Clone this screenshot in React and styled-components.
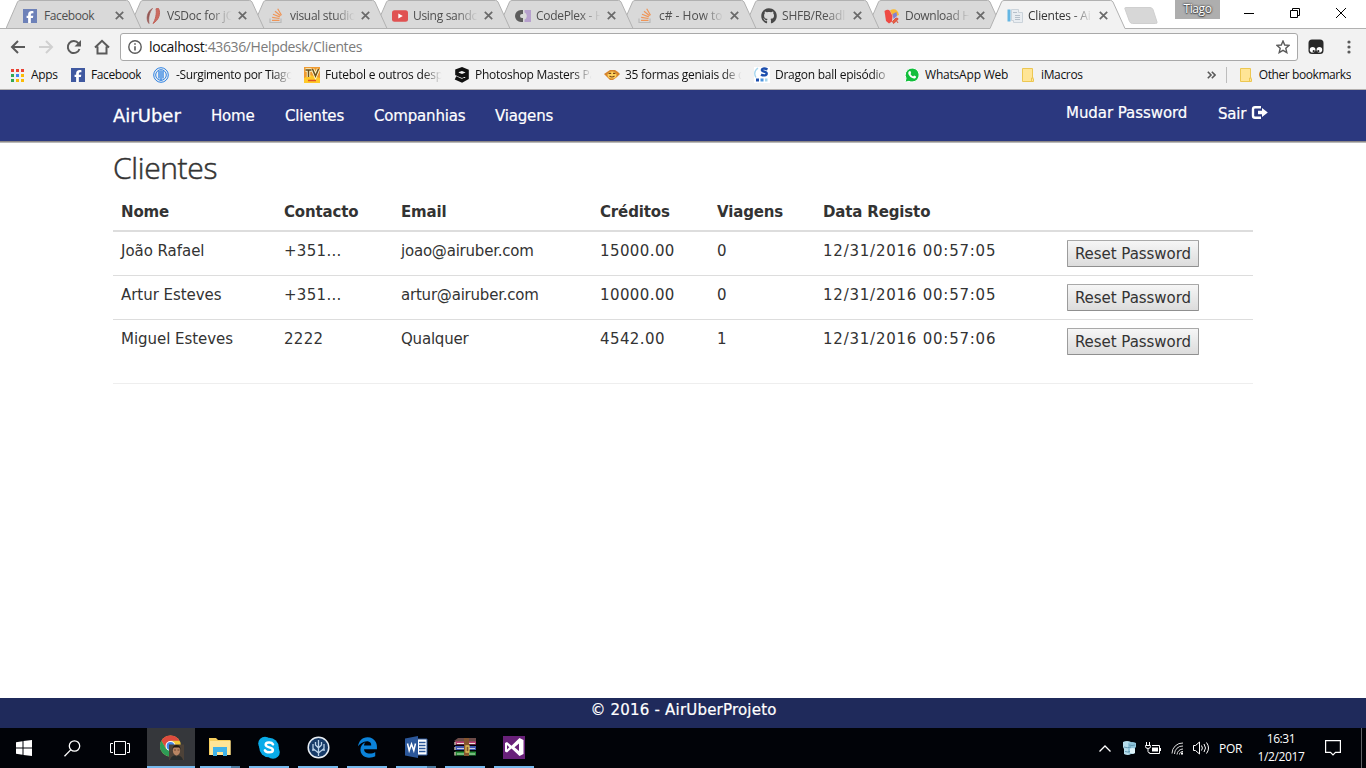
import React from "react";
import styled, { createGlobalStyle } from "styled-components";
import { FaGithub, FaFacebookF, FaEdgeLegacy } from "react-icons/fa6";

const GlobalStyle = createGlobalStyle`
  * { box-sizing: border-box; }
  body { margin: 0; background: #fff; overflow: hidden; }
  svg { display: block; flex: none; }
`;

const ui = `"Open Sans", "Noto Sans", sans-serif`;
const verdana = `"DejaVu Sans", Verdana, sans-serif`;

const Screen = styled.div`
  width: 1366px;
  height: 768px;
  display: flex;
  flex-direction: column;
  background: #fff;
`;

/* ---------- browser ---------- */
const TabStrip = styled.div`
  height: 29px;
  display: flex;
  padding-left: 6px;
  position: relative;
  isolation: isolate;
  flex: none;
  background: linear-gradient(#fff 28px, #b1b1b1 28px);
  font-family: ${ui};
  font-size: 12px;
`;
const Tab = styled.div`
  position: relative;
  z-index: ${p => p.$z};
  width: 136px;
  height: 29px;
  margin-right: -13px;
  flex: none;
  display: flex;
  align-items: center;
  padding: 2px 0 0 17px;
  color: ${p => (p.$active ? "#333" : "#4f4f4f")};
`;
const TabShape = styled.svg`
  position: absolute;
  left: 0;
  top: 0;
  z-index: -1;
`;
const TabIcon = styled.span`
  width: 16px;
  flex: none;
`;
const TabTitle = styled.span`
  width: 66px;
  margin: 0 5px;
  overflow: hidden;
  white-space: nowrap;
  line-height: 18px;
  letter-spacing: ${p => p.$ls ?? -0.2}px;
  ${p => p.$fade && "mask-image: linear-gradient(90deg, #000 66%, transparent 98%);"}
`;
const NewTab = styled.svg`
  margin-left: 10px;
`;
const WindowControls = styled.div`
  margin-left: auto;
  margin-right: 2px;
  display: flex;
  height: 28px;
  align-items: flex-start;
`;
const UserBadge = styled.div`
  width: 45px;
  height: 19px;
  margin-right: 6px;
  background: #aeaeae;
  color: #fff;
  text-align: center;
  line-height: 18px;
  letter-spacing: -0.4px;
  text-shadow: 0 0 2px #444, 0 0 2px #444, 0 1px 1px #555;
`;
const ControlButton = styled.div`
  width: 46px;
  height: 26px;
  display: flex;
  align-items: center;
  justify-content: center;
`;

const Toolbar = styled.div`
  height: 33px;
  flex: none;
  background: #f2f2f2;
  display: flex;
  align-items: center;
  padding: 3px 0 0 10px;
`;
const NavButton = styled.div`
  width: 28px;
  display: flex;
  svg { width: 16px; height: 16px; }
`;
const AddressBar = styled.div`
  width: 1178px;
  height: 28px;
  margin-left: -2px;
  border: 1px solid #a9a9a9;
  border-radius: 3px;
  background: #fff;
  display: flex;
  align-items: center;
  padding: 0 7px;
  color: #7b7b7b;
  font: 14px ${ui};
  letter-spacing: -0.37px;
  span { margin: 0 auto 0 7px; line-height: 20px; }
  b { font-weight: 400; color: #111; }
`;
const ToolbarEnd = styled.div`
  display: flex;
  align-items: center;
  gap: 23px;
  margin-left: 10px;
`;

const Bookmarks = styled.div`
  height: 28px;
  flex: none;
  background: #f2f2f2;
  border-bottom: 1px solid #b4b1b0;
  display: flex;
  align-items: center;
  padding: 0 15px 2px 9px;
  font: 12px ${ui};
  color: #111;
`;
const Bookmark = styled.div`
  width: ${p => p.$w}px;
  display: flex;
  align-items: center;
  gap: ${p => p.$gap ?? 5}px;
  white-space: nowrap;
  letter-spacing: ${p => p.$ls ?? -0.2}px;
  span {
    overflow: hidden;
    width: ${p => (p.$fade ? p.$fade + "px" : "auto")};
    ${p => p.$fade && "mask-image: linear-gradient(90deg, #000 82%, transparent 98%);"}
  }
`;
const Overflow = styled.div`
  margin-left: auto;
  display: flex;
  align-items: center;
`;
const Divider = styled.i`
  width: 1px;
  height: 16px;
  margin: 0 12px 0 10px;
  background: #bdbdbd;
`;
const FacebookTile = styled.div`
  width: 14px;
  height: 14px;
  flex: none;
  background: ${p => (p.$faded ? "#6d81b8" : "#4059a0")};
  color: #fff;
  display: flex;
  align-items: flex-end;
  justify-content: flex-end;
  padding-right: 1px;
`;

/* ---------- page ---------- */
const NavBar = styled.nav`
  height: 53px;
  flex: none;
  background: #2b387f;
  border-bottom: 1px solid #b9b9b9;
  box-shadow: inset 0 -1px #8d8888;
  display: flex;
  padding: 0 97px 0 113px;
  color: #fff;
  font: 15px ${verdana};
`;
const Brand = styled.div`
  width: 98px;
  font-size: 18px;
  line-height: 51px;
  -webkit-text-stroke: 0.3px #fff;
`;
const NavItem = styled.div`
  margin-right: 30px;
  width: ${p => p.$w}px;
  white-space: nowrap;
  line-height: ${p => p.$lh ?? 53}px;
  letter-spacing: ${p => p.$ls ?? -0.18}px;
  -webkit-text-stroke: 0.2px #fff;
  display: flex;
  gap: 5px;
  svg { margin-top: 15px; }
`;
const NavRight = styled.div`
  display: flex;
  margin-left: auto;
  & > :last-child { margin-right: 0; }
`;

const Page = styled.main`
  flex: 1;
  padding: 0 113px;
  color: #333;
  font: 15px/21px ${verdana};
`;
const Title = styled.h2`
  margin: 8px 0 9px;
  height: 33px;
  font: 300 30px/33px ${ui};
  letter-spacing: -0.35px;
  -webkit-text-stroke: 0.5px #333;
`;
const Table = styled.table`
  width: 1140px;
  table-layout: fixed;
  border-collapse: separate;
  border-spacing: 0;
`;
const HeadCell = styled.th`
  width: ${p => p.$w}px;
  height: 39px;
  padding: 9px 8px 7px;
  text-align: left;
  line-height: 21px;
  border-bottom: 2px solid #ddd;
  letter-spacing: -0.15px;
`;
const Cell = styled.td`
  height: ${p => (p.$first ? 43 : 44)}px;
  padding: ${p => (p.$action ? "8px" : "9px 8px 7px")};
  vertical-align: top;
  line-height: 21px;
  white-space: nowrap;
  border-top: ${p => (p.$first ? "0" : "1px solid #ddd")};
  letter-spacing: ${p => p.$ls ?? 0}px;
`;
const ResetButton = styled.button`
  display: block;
  width: 132px;
  height: 27px;
  padding: 1px 0 0;
  border: 1px solid #a2a2a2;
  border-color: #a9a9a9 #9c9c9c #8f8f8f #9c9c9c;
  border-radius: 1px;
  background: linear-gradient(#f6f6f6, #dcdcdc);
  color: #333;
  font: 15px/24px ${verdana};
  letter-spacing: -0.04px;
  white-space: nowrap;
`;
const Rule = styled.hr`
  margin: 20px 0 0;
  border: 0;
  border-top: 1px solid #eee;
`;
const Footer = styled.footer`
  height: 30px;
  flex: none;
  background: #1f2a5b;
  color: #fff;
  text-align: center;
  font: 15px/24px ${verdana};
  letter-spacing: 0.2px;
  -webkit-text-stroke: 0.2px #fff;
  padding-left: 1px;
`;

/* ---------- taskbar ---------- */
const Taskbar = styled.div`
  height: 40px;
  flex: none;
  background: #010308;
  display: flex;
  color: #fff;
  font: 12px ${ui};
`;
const SystemButton = styled.div`
  width: ${p => p.$w ?? 48}px;
  height: 40px;
  display: flex;
  align-items: center;
  justify-content: center;
`;
const Apps = styled.div`
  display: flex;
  gap: 1px;
  margin-left: 3px;
`;
const AppButton = styled.div`
  width: 48px;
  height: 40px;
  padding: 0 ${p => (p.$active ? 0 : 4)}px;
  background: ${p => (p.$active ? "#35373b" : "transparent")};
  display: flex;
  flex-direction: column;
  align-items: center;
  & > :first-child { margin: auto; }
`;
const Underline = styled.i`
  width: 100%;
  height: 2px;
  flex: none;
  background: ${p => (p.$stack ? "linear-gradient(90deg,#76b9ed 31px,#4d7ba0 31px)" : "#76b9ed")};
`;
const Tray = styled.div`
  margin-left: auto;
  display: flex;
  align-items: center;
`;
const Language = styled.span`
  width: 24px;
  margin-left: 6px;
  letter-spacing: -0.3px;
`;
const Clock = styled.div`
  width: 70px;
  margin-left: 3px;
  text-align: center;
  line-height: 18px;
  padding-bottom: 1px;
  letter-spacing: -0.4px;
`;
const NoticeButton = styled(SystemButton)`
  width: 32px;
  margin-left: 1px;
`;
const DesktopEdge = styled.i`
  width: 1px;
  height: 40px;
  margin: 0 4px 0 12px;
  background: #606266;
`;

/* ---------- drawings ---------- */
const Close = ({ c = "#6a6a6a" }) => (
  <svg width="9" height="9" viewBox="0 0 9 9"><path d="M.8.8l7.4 7.4M8.2.8L.8 8.2" stroke={c} strokeWidth="1.7" /></svg>
);
const Facebook = ({ faded }) => <FacebookTile $faded={faded}><FaFacebookF size={12} /></FacebookTile>;
const JQueryDoc = () => (
  <svg width="16" height="16" viewBox="0 0 16 16">
    <path d="M6.500.5C1 3-.5 12 3 15.500 2 10 3.500 4 6.500.5z" fill="#8d5451" stroke="#9d5c58" strokeWidth=".7" />
    <path d="M7 15.500C9.500 12 11 5 10 .8L12.500.5C15 5 13 12 7 15.500z" fill="#cc6c60" stroke="#c2635a" />
  </svg>
);
const StackOverflow = () => (
  <svg width="16" height="16" viewBox="0 0 16 16" fill="none">
    <path d="M1 10.500V14.500H12V10.500" stroke="#b9b9b9" strokeWidth="1.200" />
    <path d="M3 12.300H10.500M3.200 9.400l7.300 1.100M4 6.200l6.800 2.700M6 3.200l5.600 4.600M8.700.8l3.800 6.400" stroke="#ef9558" strokeWidth="1.200" />
  </svg>
);
const YouTube = () => (
  <svg width="16" height="16" viewBox="0 0 16 16"><rect y="2.300" width="16" height="11.500" rx="2.500" fill="#e05252" /><path d="M6.300 5.500v5l4.500-2.500z" fill="#fff" /></svg>
);
const CodePlex = () => (
  <svg width="16" height="16" viewBox="0 0 16 16"><path d="M8 2H6a6 6 0 000 12h2v-4H7a2 2 0 010-4h1z" fill="#5c5c5c" /><path d="M9.500 2h6.500v12H9.500v-2.500c3-1 3-6 0-7z" fill="#b7a1cd" /></svg>
);
const Download = () => (
  <svg width="16" height="16" viewBox="0 0 16 16"><path d="M6 2.500C10 0 14 1.500 15 7L9.500 9z" fill="#f9b936" /><path d="M8.500 6l4-2 .5 4-3.500 3z" fill="#8181d2" /><path d="M.5 3Q4 .5 6 3l2.500 5L8 13.500 5 15.500 2 13z" fill="#ee4a44" /><path d="M8.500 13.500L12 10l2 .5-.5 1.500-4 3.500zM12.500 12.500l1.500 2.500" fill="#e8613e" stroke="#d85245" /></svg>
);
const PageIcon = () => (
  <svg width="16" height="16" viewBox="0 0 16 16"><path d="M.5 1.500h3v12h-3z" fill="#64b6e3" /><path d="M4.500 1.500h7v3h4v10h-9v-2h-2z" fill="#e9edf1" stroke="#cbd3da" /><path d="M6 4.500h4M8 7.500h5M8 9.500h5M8 11.500h5" stroke="#b6c0ca" /></svg>
);
const AppsIcon = () => {
  const colors = ["#ea4335", "#ea4335", "#ea4335", "#34a853", "#4285f4", "#fbbc05", "#34a853", "#fbbc05", "#fbbc05"];
  return <svg width="16" height="16" viewBox="0 0 16 16">{colors.map((c, i) => <rect key={i} x={2 + (i % 3) * 5} y={2 + Math.floor(i / 3) * 5} width="3" height="3" fill={c} />)}</svg>;
};
const Rings = () => (
  <svg width="16" height="16" viewBox="0 0 16 16" fill="none" stroke="#2b80e2"><circle cx="8" cy="8" r="7.300" /><circle cx="8" cy="8" r="5.300" /><path d="M6 4v7.500M8 3.500v10M10 4v7.500" strokeWidth="1.300" /></svg>
);
const TvIcon = () => (
  <svg width="16" height="16" viewBox="0 0 16 16"><rect width="16" height="16" fill="#ef9a31" /><path d="M0 11l6-3 10 3v5H0z" fill="#ffc928" /><path d="M1.500 3h6M4.500 3v7M8.500 2l3 7L14.500 2" stroke="#fff7c8" strokeWidth="3.400" fill="none" /><path d="M1.500 3h6M4.500 3v7M8.500 2l3 7L14.500 2" stroke="#6b501c" strokeWidth="1.500" fill="none" /><path d="M4 13.500h8" stroke="#df5127" strokeWidth="1.500" /></svg>
);
const NineGag = () => (
  <svg width="16" height="16" viewBox="0 0 16 16"><path d="M3 8.200V3.800L8 2l5 2v7L8 13.800 1.500 10.800M3 7l5 2 5-2" fill="none" stroke="#111" strokeWidth="3.600" /></svg>
);
const Face = () => (
  <svg width="16" height="16" viewBox="0 0 16 16"><path d="M0 7l3-2 3-2h5l3 2 2 2-3 3-4 3H6L3 10z" fill="#d7842c" /><ellipse cx="8" cy="8" rx="4.500" ry="3.600" fill="#ffd15c" /><path d="M4.500 6.300h2.700M9 6.300h2.500M5.500 9q2.500 2 5 0" stroke="#774018" strokeWidth="1.200" fill="none" /></svg>
);
const DragonBall = () => (
  <svg width="16" height="16" viewBox="0 0 16 16"><rect width="16" height="16" fill="#fff" /><path d="M4 1C0 4 .5 8 2 10.500" stroke="#a4d5ee" strokeWidth="1.300" fill="none" /><path d="M13.500 2.300C10 .8 7.500 1.500 8 3.400c.4 1.600 4.800 1.100 4.700 3.200 0 2.200-3.400 2.200-5.700 1" fill="none" stroke="#1d4fae" strokeWidth="2.400" /><path d="M2 11.500h3v3H2z" fill="#1d4fae" /><path d="M6.500 11.500h3v3h-3z" fill="#4b94de" /><path d="M11 11.500h2.500v3H11z" fill="#a4d5ee" /></svg>
);
const WhatsApp = () => (
  <svg width="16" height="16" viewBox="0 0 16 16"><path d="M1 15.300l1-4A7 7 0 118 15a7 7 0 01-3-.7z" fill="#12bf3c" stroke="#fff" /><path d="M5 4.300l1.400-.2.800 2-.7 1c.6 1.200 1.400 1.800 2.600 2.400l1-1 2 .9c0 3-4 2.400-6.300-.1C4 7.500 3.800 5.300 5 4.300z" fill="#fff" /></svg>
);
const Folder = () => (
  <svg width="14" height="16" viewBox="0 0 14 16"><path d="M1.500 1.500h10v9.500l1 1v2.500h-11z" fill="#ffe596" stroke="#ecc752" /><path d="M10.500 14.500V11h2" fill="none" stroke="#ecc752" /></svg>
);
const stroke = { fill: "none", stroke: "#5a5a5a", strokeWidth: 2 };
const Back = () => <svg viewBox="0 0 16 16" {...stroke}><path d="M15 8H2.500M8 2L2 8l6 6" /></svg>;
const Forward = () => <svg viewBox="0 0 16 16" {...stroke} stroke="#d0d0d0"><path d="M1 8h12.500M8 2l6 6-6 6" /></svg>;
const Reload = () => <svg viewBox="0 0 16 16" {...stroke}><path d="M13.500 10A6 6 0 1112.500 4.300" /><path d="M15 1v6.500H8.500z" fill="#5a5a5a" stroke="none" /></svg>;
const Home = () => <svg viewBox="0 0 16 16" {...stroke}><path d="M1 8.500L8 1.800l7 6.700M3.500 7.500v7h9v-7" /></svg>;
const Info = () => <svg width="14" height="14" viewBox="0 0 14 14" fill="none" stroke="#5a5a5a" strokeWidth="1.400"><circle cx="7" cy="7" r="6.200" /><path d="M7 6.200v4.300M7 3.300v1.500" strokeWidth="1.600" /></svg>;
const Star = () => <svg width="14" height="14" viewBox="0 0 14 14" fill="none" stroke="#5a5a5a" strokeWidth="1.400"><path d="M7 1l1.700 4 4.400.4-3.300 2.900 1 4.300L7 10.300l-3.800 2.300 1-4.300L.9 5.400 5.300 5z" /></svg>;
const Tamper = () => <svg width="16" height="16" viewBox="0 0 16 16"><rect x=".5" y=".5" width="15" height="14.500" rx="3.500" fill="#292929" /><circle cx="4.600" cy="10.700" r="2.800" fill="#fff" /><circle cx="11.400" cy="10.700" r="2.800" fill="#fff" /><circle cx="5.700" cy="12.200" r="1.100" fill="#292929" /><circle cx="10.300" cy="12.200" r="1.100" fill="#292929" /></svg>;
const Menu = () => <svg width="4" height="14" viewBox="0 0 4 14" fill="#5a5a5a"><circle cx="2" cy="2" r="1.600" /><circle cx="2" cy="7" r="1.600" /><circle cx="2" cy="12" r="1.600" /></svg>;
const Chevrons = () => <svg width="9" height="8" viewBox="0 0 9 8" fill="none" stroke="#5a5a5a" strokeWidth="1.600"><path d="M.8.8L4 4 .8 7.200M4.800.8L8 4 4.800 7.200" /></svg>;
const LogOut = () => <svg width="17" height="16" viewBox="0 0 17 16"><path d="M10 2.200H4Q2 2.200 2 4.200v6.600q0 2 2 2h6" fill="none" stroke="#fff" strokeWidth="2.400" /><path d="M7 5.800h4V3L16.800 7.500 11 12V9.200H7z" fill="#fff" /></svg>;

const WindowsLogo = () => <svg width="16" height="16" viewBox="0 0 16 16" fill="#fff"><path d="M0 2.200L6.500 1.300v6.200H0zM7.500 1.100L16 0v7.500H7.500zM0 8.500h6.500v6.200L0 13.800zM7.500 8.500H16V16l-8.500-1.100z" /></svg>;
const Search = () => <svg width="17" height="17" viewBox="0 0 17 17" fill="none" stroke="#fff" strokeWidth="1.300"><circle cx="10.500" cy="6" r="5.200" /><path d="M6.700 9.900L.5 16.300" /></svg>;
const TaskView = () => <svg width="20" height="14" viewBox="0 0 20 14" fill="none" stroke="#fff"><path d="M4.500.5h11v13h-11zM3 2.500H.5v9H3M17 2.500h2.500v9H17" /></svg>;
const Chrome = () => (
  <svg width="25" height="26" viewBox="-2 -1 25 26">
    <g transform="translate(-1 -1)"><circle cx="10.500" cy="12" r="10.500" fill="#f2c73b" /><path d="M1.400 6.700A10.500 10.500 0 0119.600 6.800H10.500l-4.500 8z" fill="#dd4b3e" /><path d="M1.400 6.700l4.600 8 6 2-3 5.700A10.500 10.500 0 011.400 6.700z" fill="#2d9b56" />
    <circle cx="10.500" cy="12" r="5" fill="#fff" /><circle cx="10.500" cy="12" r="3.900" fill="#4285e8" /></g>
    <path d="M8 9.500h15V25H8z" fill="#4d4238" /><ellipse cx="15.500" cy="15.500" rx="3.600" ry="5" fill="#b98563" /><path d="M11.500 14.500q0-4.500 4-4.500t4 4.500l-1-2h-6z" fill="#211914" /><path d="M9 25q1-4 4.500-4.500l2 1 2-1Q21 21 22 25z" fill="#292c2c" /><path d="M13 15h2M16.500 15h2" stroke="#6c4634" />
  </svg>
);
const Explorer = () => <svg width="22" height="20" viewBox="0 0 22 20"><path d="M0 1h7l2 2h12.500v15H0z" fill="#f6ce5e" /><path d="M1 4h20.500v14H1z" fill="#ffe597" /><path d="M4 10h14v9h-4v-4H8v4H4z" fill="#3fb2e9" /></svg>;
const Skype = () => <svg width="22" height="23" viewBox="0 0 22 23"><circle cx="7" cy="7.500" r="6.800" fill="#09ace9" /><circle cx="15" cy="16" r="6.800" fill="#09ace9" /><circle cx="11" cy="11.500" r="9.800" fill="#09ace9" /><path d="M15 8.300C13.500 5.700 7.500 6 7.700 9c.3 3 7.300 1.700 7.200 5 0 3.200-6.500 3-8 .3" fill="none" stroke="#fff" strokeWidth="2.500" strokeLinecap="round" /></svg>;
const SourceTree = () => <svg width="23" height="23" viewBox="0 0 23 23" fill="none"><circle cx="11.500" cy="11.500" r="10.300" fill="#173b68" stroke="#e7edf3" strokeWidth="1.500" /><path d="M11.500 4v16M11.500 17L6 12.500V8M11.500 17l5.500-4.500V8M11.500 12L8.500 9V6M11.500 12l3-3V6M8 14H5M15 14h3" stroke="#b9d1e7" strokeWidth="1.300" /></svg>;
const Word = () => <svg width="23" height="22" viewBox="0 0 23 22"><path d="M12 3h10v16H12z" fill="#fff" stroke="#2b579a" /><path d="M14 6.500h6.500M14 9.500h6.500M14 12.500h6.500M14 15.500h6.500" stroke="#2b579a" strokeWidth="1.300" /><path d="M0 2.500L13 0v22L0 19.500z" fill="#2b579a" /><path d="M2.500 7.500l1.700 7L6.500 8l2.300 6.500 1.700-7" stroke="#fff" strokeWidth="1.500" fill="none" /></svg>;
const WinRar = () => (
  <svg width="24" height="19" viewBox="0 0 24 19">
    <path d="M1 3l4-3h18v4H3z" fill="#6d4b48" /><path d="M2 3.500h21v3H2z" fill="#bf3e79" /><path d="M4 5.500h18" stroke="#eee5d5" /><path d="M2 8h21v4H2z" fill="#4058b2" /><path d="M4 10.500h18" stroke="#c9cce0" /><path d="M2 13.500h21v4H2z" fill="#278e37" /><path d="M4 16h18" stroke="#c6e0c4" />
    <path d="M2 4v3M2 9v3M2 14v3.500" stroke="#b9ae9e" strokeWidth="1.500" /><path d="M11 0h5v18h-5z" fill="#85552f" /><path d="M13 8h3v6h-3z" fill="none" stroke="#dbbd59" strokeWidth="1.300" />
  </svg>
);
const VisualStudio = () => <svg width="22" height="23" viewBox="0 0 22 23"><path d="M0 0h22v23H0z" fill="#682179" /><path d="M2 7l2-1 4.500 3.700L16.500 2 20.500 4v14l-4 2-8-7.500L4 16.500 2 15.500zM4 9v4.500l2.300-2.200zM16 7.500l-4.500 3.700L16 15z" fill="#fff" fillRule="evenodd" /></svg>;

const UpArrow = () => <svg width="12" height="7" viewBox="0 0 12 7" fill="none" stroke="#fff" strokeWidth="1.300"><path d="M.5 6.500L6 1l5.500 5.500" /></svg>;
const Database = () => <svg width="15" height="16" viewBox="0 0 15 16"><path d="M1 2q4-2 8 0v12q-3 2-7 0V9L1 7z" fill="#b6ddeb" /><path d="M6 3q4-2 8 0v4l-1 1v5q-3 2-7 0z" fill="#8fc4da" /><path d="M8 8.500q3-1 5 0V13q-2 1.500-5 0z" fill="#dff4fa" /><path d="M2 7q3 1.500 7 0M3 11.500q3 1 5 0M7 5q3 1 6 0" stroke="#6198b1" fill="none" /></svg>;
const Battery = () => <svg width="16" height="13" viewBox="0 0 16 13" fill="none" stroke="#fff"><path d="M1.500 0v3M4.500 0v3M.5 3.500h5v1q0 2-2.500 2t-2.500-2zM3 6.500v3q0 1.500 2 1.500M7 3.500h7.500v8h-10M15.500 6v3" /><path d="M7 5.500h6v4H7z" fill="#fff" stroke="none" /></svg>;
const Wifi = () => <svg width="13" height="13" viewBox="0 0 13 13" fill="none" stroke="#ddd"><path d="M1 11.500A10.500 10.500 0 0112 1M3.500 12A8 8 0 0112 4M6 12.500A6 6 0 0112 7M8.500 12.500A3 3 0 0112 9.500" /><path d="M10 10.500h2v2h-2z" fill="#fff" stroke="none" /></svg>;
const Volume = () => <svg width="17" height="14" viewBox="0 0 17 14" fill="none" stroke="#fff"><path d="M.5 4.500h2L6.500 1v12l-4-3.500h-2zM8.500 4.500q1.800 2.500 0 5M11 3q3 4 0 8M13.500 1.500q4 5.500 0 11" /></svg>;
const Notice = () => <svg width="16" height="16" viewBox="0 0 16 16" fill="none" stroke="#fff" strokeWidth="1.200"><path d="M.6.6h14.800v11.800h-4.900L8 15l-2.500-2.600H.6z" /></svg>;

const tabs = [
  { title: "Facebook", icon: <Facebook faded />, ls: -0.4 },
  { title: "VSDoc for jQ", icon: <JQueryDoc />, fade: true, ls: -0.2 },
  { title: "visual studio", icon: <StackOverflow />, fade: true, ls: -0.3 },
  { title: "Using sandc", icon: <YouTube />, fade: true, ls: -0.3 },
  { title: "CodePlex - H", icon: <CodePlex />, fade: true, ls: -0.3 },
  { title: "c# - How to", icon: <StackOverflow />, fade: true, ls: 0 },
  { title: "SHFB/Readl", icon: <FaGithub size={16} color="#484848" />, fade: true, ls: -0.2 },
  { title: "Download H", icon: <Download />, fade: true, ls: -0.3 },
  { title: "Clientes - Ai", icon: <PageIcon />, fade: true, active: true, ls: -0.2 },
];
const clients = [
  ["João Rafael", "+351...", "joao@airuber.com", "15000.00", "0", "12/31/2016 00:57:05"],
  ["Artur Esteves", "+351...", "artur@airuber.com", "10000.00", "0", "12/31/2016 00:57:05"],
  ["Miguel Esteves", "2222", "Qualquer", "4542.00", "1", "12/31/2016 00:57:06"],
];
const cellSpacing = [-0.04, 0.3, -0.21, 0.4, 0, 0.77];
const columns = [["Nome", 163], ["Contacto", 117], ["Email", 199], ["Créditos", 117], ["Viagens", 106], ["Data Registo", 244], ["", 194]];
const taskApps = [
  { icon: <Chrome />, active: true },
  { icon: <Explorer />, stack: true },
  { icon: <Skype /> },
  { icon: <SourceTree /> },
  { icon: <FaEdgeLegacy size={21} color="#0b83da" /> },
  { icon: <Word />, stack: true },
  { icon: <WinRar /> },
  { icon: <VisualStudio /> },
];

export default function App() {
  return (
    <Screen>
      <GlobalStyle />
      <TabStrip>
        {tabs.map((t, i) => (
          <Tab key={i} $z={t.active ? 20 : 10 - i} $active={t.active}>
            <TabShape width="136" height="29" viewBox="0 0 136 29">
              <path d="M0 29V28.500L11.500 2Q12.200.5 14 .5H120.500Q122.300.5 123 2L135 28.500V29z" fill={t.active ? "#f2f2f2" : "#d9d9d9"} />
              <path d={`M0 28.500L11.500 2Q12.200.5 14 .5H120.500Q122.300.5 123 2L135 28.500${t.active ? "" : "H0"}`} fill="none" stroke="#b1b1b1" />
            </TabShape>
            <TabIcon>{t.icon}</TabIcon>
            <TabTitle $fade={t.fade} $ls={t.ls}>{t.title}</TabTitle>
            <Close />
          </Tab>
        ))}
        <NewTab width="36" height="28" viewBox="0 0 36 28">
          <path d="M2.500 7.500H27q2 0 3 2L34 22q.5 1.500-1.500 1.500H9.500q-2 0-3-2L2 9q-.5-1.500.5-1.500z" fill="#d7d7d7" stroke="#cfcfcf" />
        </NewTab>
        <WindowControls>
          <UserBadge>Tiago</UserBadge>
          <ControlButton><svg width="10" height="10"><path d="M0 5.500h10" stroke="#000" /></svg></ControlButton>
          <ControlButton><svg width="10" height="10" fill="none" stroke="#000"><path d="M.5 2.500h7v7h-7zM2.500 2V.5h7v7H8" /></svg></ControlButton>
          <ControlButton><svg width="10" height="10" stroke="#000"><path d="M0 0l10 10M10 0L0 10" /></svg></ControlButton>
        </WindowControls>
      </TabStrip>
      <Toolbar>
        <NavButton><Back /></NavButton>
        <NavButton><Forward /></NavButton>
        <NavButton><Reload /></NavButton>
        <NavButton><Home /></NavButton>
        <AddressBar><Info /><span><b>localhost</b>:43636/Helpdesk/Clientes</span><Star /></AddressBar>
        <ToolbarEnd><Tamper /><Menu /></ToolbarEnd>
      </Toolbar>
      <Bookmarks>
        <Bookmark $w={62} $gap={6} $ls={-0.3}><AppsIcon /><span>Apps</span></Bookmark>
        <Bookmark $w={82} $gap={6} $ls={-0.4}><Facebook /><span>Facebook</span></Bookmark>
        <Bookmark $w={151} $fade={118} $gap={7} $ls={-0.36}><Rings /><span>-Surgimento por Tiago</span></Bookmark>
        <Bookmark $w={150} $fade={119} $ls={-0.2}><TvIcon /><span>Futebol e outros desp</span></Bookmark>
        <Bookmark $w={150} $fade={119} $ls={-0.25}><NineGag /><span>Photoshop Masters Pa</span></Bookmark>
        <Bookmark $w={150} $fade={119} $ls={-0.28}><Face /><span>35 formas geniais de d</span></Bookmark>
        <Bookmark $w={150} $fade={119} $ls={-0.25}><DragonBall /><span>Dragon ball episódio</span></Bookmark>
        <Bookmark $w={117}><WhatsApp /><span>WhatsApp Web</span></Bookmark>
        <Bookmark $w={90} $gap={6} $ls={-0.35}><Folder /><span>iMacros</span></Bookmark>
        <Overflow><Chevrons /><Divider /><Bookmark $gap={6} $ls={-0.42}><Folder /><span>Other bookmarks</span></Bookmark></Overflow>
      </Bookmarks>
      <NavBar>
        <Brand>AirUber</Brand>
        <NavItem $w={44}>Home</NavItem>
        <NavItem $w={59}>Clientes</NavItem>
        <NavItem $w={91}>Companhias</NavItem>
        <NavItem $w={60}>Viagens</NavItem>
        <NavRight>
          <NavItem $w={122} $lh={46} $ls={-0.06}>Mudar Password</NavItem>
          <NavItem $w={51} $lh={48}>Sair<LogOut /></NavItem>
        </NavRight>
      </NavBar>
      <Page>
        <Title>Clientes</Title>
        <Table>
          <thead>
            <tr>{columns.map(([name, w]) => <HeadCell key={name} $w={w}>{name}</HeadCell>)}</tr>
          </thead>
          <tbody>
            {clients.map((row, r) => (
              <tr key={r}>
                {row.map((v, i) => <Cell key={i} $first={r === 0} $ls={cellSpacing[i]}>{v}</Cell>)}
                <Cell $action $first={r === 0}><ResetButton>Reset Password</ResetButton></Cell>
              </tr>
            ))}
          </tbody>
        </Table>
        <Rule />
      </Page>
      <Footer>© 2016 - AirUberProjeto</Footer>
      <Taskbar>
        <SystemButton><WindowsLogo /></SystemButton>
        <SystemButton><Search /></SystemButton>
        <SystemButton><TaskView /></SystemButton>
        <Apps>
          {taskApps.map((a, i) => (
            <AppButton key={i} $active={a.active}>{a.icon}<Underline $stack={a.stack} /></AppButton>
          ))}
        </Apps>
        <Tray>
          <SystemButton $w={24}><UpArrow /></SystemButton>
          <SystemButton $w={24}><Database /></SystemButton>
          <SystemButton $w={24}><Battery /></SystemButton>
          <SystemButton $w={24}><Wifi /></SystemButton>
          <SystemButton $w={24}><Volume /></SystemButton>
          <Language>POR</Language>
          <Clock>16:31<br />1/2/2017</Clock>
          <NoticeButton><Notice /></NoticeButton>
          <DesktopEdge />
        </Tray>
      </Taskbar>
    </Screen>
  );
}
